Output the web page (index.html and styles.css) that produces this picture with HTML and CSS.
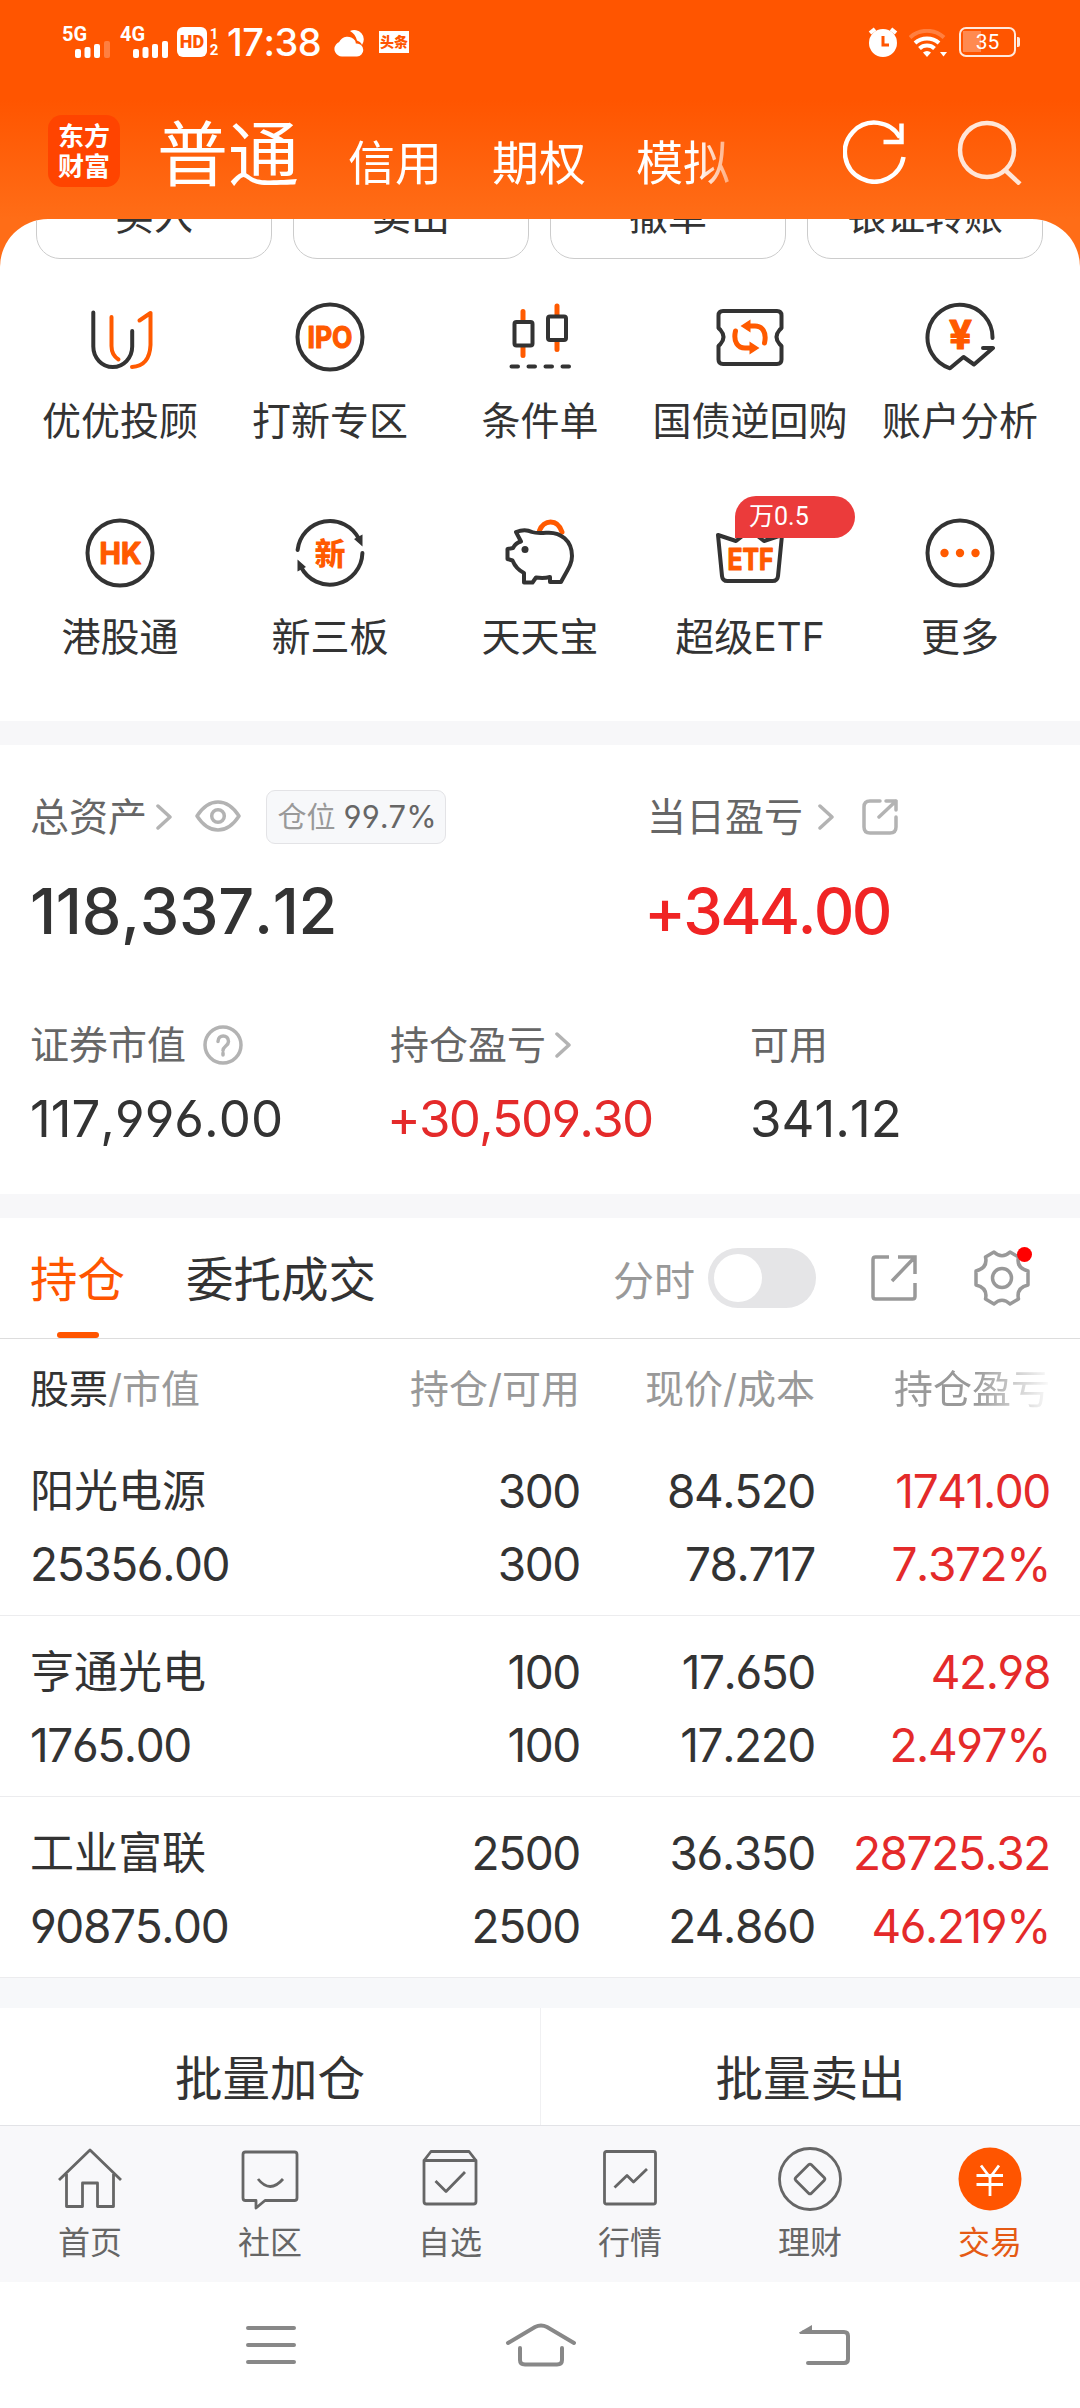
FILE: index.html
```html
<!DOCTYPE html>
<html lang="zh-CN">
  <head>
    <meta charset="UTF-8" />
    <meta name="viewport" content="width=device-width, initial-scale=1.0" />
    <title>东方财富 - 交易</title>
    <link rel="stylesheet" href="styles.css">
  </head>
  <body>
    <header class="top">
      <div class="status">
        <div class="sim">
          <span>5G</span>
          <svg width="36" height="17" viewBox="0 0 36 17" fill="#fff">
            <rect x="0" y="8" width="6" height="9" rx="2" />
            <rect x="9.5" y="6" width="6" height="11" rx="2" />
            <rect x="19" y="3" width="6" height="14" rx="2" />
            <rect x="29" y="0" width="6" height="17" rx="2" opacity="0.25" />
          </svg>
        </div>
        <div class="sim">
          <span>4G</span>
          <svg width="36" height="17" viewBox="0 0 36 17" fill="#fff">
            <rect x="0" y="8" width="6" height="9" rx="2" />
            <rect x="9.5" y="6" width="6" height="11" rx="2" />
            <rect x="19" y="3" width="6" height="14" rx="2" />
            <rect x="29" y="0" width="6" height="17" rx="2" />
          </svg>
        </div>
        <div class="hd">HD</div>
        <div class="hd-num"><span>1</span><span>2</span></div>
        <div class="clock">17:38</div>
        <svg class="cloud" width="31" height="29" viewBox="0 0 31 29" fill="#fff">
          <path d="M16 3a9.500 9.500 0 0 1 12 14c-1-2.500-3-3.800-5-4.500C22 8 19.500 5 16 3z" />
          <path d="M8 28.500a7.500 7.500 0 0 1-6-12c1-1.300 2-2 3-2.300A9.300 9.300 0 0 1 21 12.500c.6 1 .8 2 .8 3a6.600 6.600 0 0 1 7.500 6.500 6.500 6.500 0 0 1-6.300 6.500z" />
        </svg>
        <div class="toutiao">头条</div>
        <div class="status-right">
          <svg width="30" height="30" viewBox="0 0 30 30">
            <circle cx="15" cy="16" r="14" fill="#fff" />
            <path d="M2 6l5-4M28 6l-5-4" stroke="#fff" stroke-width="4" />
            <path d="M15 9v9h6" fill="none" stroke="#ff5500" stroke-width="3" />
          </svg>
          <svg class="wifi" width="38" height="29" viewBox="0 0 38 29" fill="none" stroke="#fff" stroke-width="4">
            <path d="M1 8.500a25 25 0 0 1 34 0" opacity="0.25" />
            <path d="M6 14a18 18 0 0 1 24 0" />
            <path d="M10.500 19.500a11 11 0 0 1 15 0" />
            <path d="M14 23.500a6 6 0 0 1 8 0l-4 4.500z" fill="#fff" stroke="none" />
            <path d="M31 23h7l-3.500 4.500z" fill="#fff" stroke="none" />
          </svg>
          <div class="battery"><span>35</span></div>
        </div>
      </div>
      <div class="title-bar">
        <div class="logo">东方<br>财富</div>
        <nav class="accounts">
          <span class="current">普通</span>
          <span>信用</span>
          <span>期权</span>
          <span>模拟</span>
        </nav>
        <svg class="refresh" width="64" height="64" viewBox="0 0 64 64" fill="none" stroke="#fff" stroke-width="4.500">
          <path d="M60.500 37A29.500 29.500 0 1 1 57 17.500" />
          <path d="M58.500 3.500v18.500h-18" />
        </svg>
        <svg width="66" height="66" viewBox="0 0 66 66" fill="none" stroke="#ffe6d8" stroke-width="4.500">
          <circle cx="31" cy="31" r="27" />
          <path d="M49 51l15 14" />
        </svg>
      </div>
    </header>

    <main class="panel">
      <div class="quick">
        <a>买入</a>
        <a>卖出</a>
        <a>撤单</a>
        <a>银证转账</a>
      </div>

      <div class="menu">
        <a class="item">
          <svg viewBox="0 0 72 72">
            <path d="M9.300 11.500v34a19.400 20.500 0 0 0 38.900 0v-15.500" />
            <path class="o" d="M27.500 16v29q0 9 7 13.500M55.500 19.500l11-7.500v32q-1 21-18.500 22" />
          </svg>
          <span>优优投顾</span>
        </a>
        <a class="item">
          <svg viewBox="0 0 72 72">
            <circle cx="36" cy="36" r="32.500" />
            <text x="13.500" y="47" textLength="45" lengthAdjust="spacingAndGlyphs">IPO</text>
          </svg>
          <span>打新专区</span>
        </a>
        <a class="item">
          <svg viewBox="0 0 72 72">
            <path class="o bold" d="M19 10.500v9M19 46v8.500M53 5v9M53 40v8.500" />
            <rect x="10.500" y="21" width="18" height="23.500" rx="2" />
            <rect x="44" y="15.500" width="18" height="23.500" rx="2" />
            <path d="M7.500 65.500h6.500M24.500 65.500h6.500M41.500 65.500h6.500M58.500 65.500h6.500" />
          </svg>
          <span>条件单</span>
        </a>
        <a class="item">
          <svg viewBox="0 0 72 72">
            <path d="M9 10h54q4.500 0 4.500 4.500V27l-2 2q-6 7 0 14l2 2v13.500q0 4.500-4.500 4.500H9q-4.500 0-4.500-4.500V45l2-2q6-7 0-14l-2-2V14.500Q4.500 10 9 10z" />
            <path class="o bold" d="M35 25h6c7 0 12 6 9.500 17M37 47h-6c-7 0-12-6-9.500-17" />
            <path class="fill" d="M26.500 25l10-6.500v13zM45.500 47l-10-6.500v13z" />
          </svg>
          <span>国债逆回购</span>
        </a>
        <a class="item">
          <svg viewBox="0 0 72 72">
            <path d="M68.500 37A32.500 32.500 0 1 0 26 67.300l13.500-11.300 10.500 7.500 19-16.500h-10" />
            <text x="25" y="47.500" textLength="23" lengthAdjust="spacingAndGlyphs" class="yen">¥</text>
          </svg>
          <span>账户分析</span>
        </a>
        <a class="item">
          <svg viewBox="0 0 72 72">
            <circle cx="36" cy="36" r="32.500" />
            <text x="15.500" y="47" textLength="42" lengthAdjust="spacingAndGlyphs">HK</text>
          </svg>
          <span>港股通</span>
        </a>
        <a class="item">
          <svg viewBox="0 0 72 72">
            <path d="M3.600 33A32.500 32.500 0 0 1 65 22M68.400 36A32.500 32.500 0 0 1 7 50" />
            <path class="dark" d="M68.500 29.500l-8.500-7.500 8.500-4.500zM3.500 42.500l8.500 7.500-8.500 4.500z" />
            <text x="36" y="47.500" class="cjk">新</text>
          </svg>
          <span>新三板</span>
        </a>
        <a class="item">
          <svg viewBox="0 0 72 72">
            <path class="o thick" d="M35.500 13.500c4-11 18-12.500 22.500 1.500" />
            <path d="M17 24.500l-5-9.500q9-3.500 16 0 4 1.500 14 .8C57 14.500 68 24 68 39c0 8-4 13-11 26H46v-5q-6 1.500-14 .5l-3.500 5H20V56Q12 52 8.500 43.500l-5-1.500V32l5.500-1q2.500-5 8-6.500z" />
            <circle class="dark" cx="21" cy="32.500" r="3.500" />
          </svg>
          <span>天天宝</span>
        </a>
        <a class="item">
          <svg viewBox="0 0 72 72">
            <path d="M4 18l18 6 14-11 14 11 18-6-4 41q-.5 5-5.500 5h-45q-5 0-5.500-5z" />
            <text x="13.500" y="52.500" textLength="46" lengthAdjust="spacingAndGlyphs">ETF</text>
          </svg>
          <em class="badge">万0.5</em>
          <span>超级ETF</span>
        </a>
        <a class="item">
          <svg viewBox="0 0 72 72">
            <circle cx="36" cy="36" r="32.500" />
            <g class="fill">
              <circle cx="20.500" cy="36" r="4.200" />
              <circle cx="36" cy="36" r="4.200" />
              <circle cx="51.500" cy="36" r="4.200" />
            </g>
          </svg>
          <span>更多</span>
        </a>
      </div>
    </main>

    <section class="assets">
      <div class="asset-main">
        <div>
          <div class="label">
            <span class="text">总资产</span>
            <svg class="arrow" viewBox="0 0 16 26"><path d="M2 2l12 11L2 24" /></svg>
            <svg class="eye" viewBox="0 0 46 32">
              <path d="M2 16Q11 2 23 2t21 14q-9 14-21 14T2 16z" />
              <circle cx="23" cy="16" r="6.300" />
            </svg>
            <span class="ratio">仓位 <b>99.7%</b></span>
          </div>
          <div class="big">118,337.12</div>
        </div>
        <div>
          <div class="label">
            <span class="text">当日盈亏</span>
            <svg class="arrow far" viewBox="0 0 16 26"><path d="M2 2l12 11L2 24" /></svg>
            <svg class="share" viewBox="0 0 36 36">
              <path d="M18 2H8Q2 2 2 8v20q0 6 6 6h20q6 0 6-6V18M24 2h10v9M34 2L17 18" />
            </svg>
          </div>
          <div class="big red">+344.00</div>
        </div>
      </div>
      <div class="asset-sub">
        <div>
          <div class="label">
            <span class="text">证券市值</span>
            <svg class="help" viewBox="0 0 40 40">
              <circle cx="20" cy="20" r="18" />
              <path d="M15 16.500c0-7.500 10.500-7.500 10.500 0 0 4.500-5.500 4.500-5.500 9M20 28v2" />
            </svg>
          </div>
          <div class="mid">117,996.00</div>
        </div>
        <div>
          <div class="label">
            <span class="text">持仓盈亏</span>
            <svg class="arrow near" viewBox="0 0 16 26"><path d="M2 2l12 11L2 24" /></svg>
          </div>
          <div class="mid red">+30,509.30</div>
        </div>
        <div>
          <div class="label"><span class="text">可用</span></div>
          <div class="mid">341.12</div>
        </div>
      </div>
    </section>

    <section class="holdings">
      <div class="tabs">
        <span class="tab active">持仓</span>
        <span class="tab">委托成交</span>
        <span class="minute">分时</span>
        <span class="switch"></span>
        <svg class="export" viewBox="0 0 46 46">
          <path d="M18 2H4.500Q2 2 2 4.500v37Q2 44 4.500 44h37q2.500 0 2.500-2.500V28M27 2h17v17M44 2L21 26" />
        </svg>
        <span class="setting">
          <svg viewBox="0 0 56 56">
            <path d="M20 2q8 7.500 16 0l8.500 5q-2.500 11 9.500 14v14q-12 3-9.500 14L36 54q-8-7.500-16 0l-8.500-5Q14 38 2 35V21Q14 18 11.500 7z" />
            <circle cx="28" cy="28" r="9.500" />
          </svg>
          <i class="dot"></i>
        </span>
      </div>

      <div class="row head">
        <span><b>股票</b>/市值</span>
        <span>持仓/可用</span>
        <span>现价/成本</span>
        <span class="fade">持仓盈亏</span>
      </div>
      <div class="row">
        <span class="name">阳光电源</span><span>300</span><span>84.520</span><span class="red">1741.00</span>
        <span>25356.00</span><span>300</span><span>78.717</span><span class="red">7.372%</span>
      </div>
      <div class="row">
        <span class="name">亨通光电</span><span>100</span><span>17.650</span><span class="red">42.98</span>
        <span>1765.00</span><span>100</span><span>17.220</span><span class="red">2.497%</span>
      </div>
      <div class="row">
        <span class="name">工业富联</span><span>2500</span><span>36.350</span><span class="red">28725.32</span>
        <span>90875.00</span><span>2500</span><span>24.860</span><span class="red">46.219%</span>
      </div>
      <div class="batch">
        <a>批量加仓</a>
        <a>批量卖出</a>
      </div>
    </section>

    <nav class="tabbar">
      <a>
        <svg viewBox="0 0 66 66">
          <path d="M2 34L33 4l31 30M9.500 28v32.500h16V37h15v23.500h16V28" />
        </svg>
        首页
      </a>
      <a>
        <svg viewBox="0 0 66 66">
          <path d="M8.500 6h49q2.500 0 2.500 2.500v43.500q0 2.500-2.500 2.500H28l-9 7.500v-7.500H8.500Q6 54.500 6 52V8.500Q6 6 8.500 6zM21 33q12 15 25 0" />
        </svg>
        社区
      </a>
      <a>
        <svg viewBox="0 0 66 66">
          <path d="M7 14.500h52v41q0 2.500-2.500 2.500h-47Q7 58 7 55.500zl7-9h38l7 9M18.500 35L29 45.500 48 26" />
        </svg>
        自选
      </a>
      <a>
        <svg viewBox="0 0 66 66">
          <path d="M9.500 5.500h47q2 0 2 2V56q0 2-2 2h-47q-2 0-2-2V7.500q0-2 2-2zM17.500 41.500l12.500-12 6.500 6.500L50 23" />
        </svg>
        行情
      </a>
      <a>
        <svg viewBox="0 0 66 66">
          <circle cx="33" cy="33" r="30.500" />
          <rect x="22" y="22" width="22" height="22" rx="2" transform="rotate(45 33 33)" />
        </svg>
        理财
      </a>
      <a class="on">
        <svg viewBox="0 0 66 66">
          <circle class="disc" cx="33" cy="33" r="31.500" />
          <path class="yuan" d="M24 19.500l9 12 9-12M33 31.500v18.500M19.500 29.500h26.500M19.500 38.500h26.500" />
        </svg>
        交易
      </a>
    </nav>

    <footer class="sysnav">
      <svg width="50" height="40" viewBox="0 0 50 40"><path d="M2 3h46M2 20h46M2 37h46" /></svg>
      <svg class="home" width="72" height="44" viewBox="0 0 72 44">
        <path d="M3 20L30 4q6-3 12 0l27 16M15 25v12q0 4.500 5 4.500h32q5 0 5-4.500V25" />
      </svg>
      <svg width="52" height="42" viewBox="0 0 52 42">
        <path d="M6 8h40q4 0 4 4v23q0 4-4 4H10" />
        <path class="tip" d="M1 8.500L14 1v9H2z" />
      </svg>
    </footer>
  </body>
</html>
```
FILE: styles.css
```css
* {
  box-sizing: border-box;
}
body {
  margin: 0;
  width: 1080px;
  background: #fff;
  color: #333;
  font-family: Inter, "Noto Sans CJK SC", sans-serif;
  font-size: 39px;
}
svg {
  display: block;
  flex: none;
}
.red {
  color: #e42a2a;
}

/* header */
.top {
  height: 268px;
  color: #fff;
  background: linear-gradient(#ff5500 100px, #ff6d17 219px);
}
.status {
  display: flex;
  align-items: center;
  height: 84px;
  padding: 0 61px 0 62px;
}
.sim {
  width: 58px;
  height: 32px;
}
.sim span {
  display: block;
  font: 700 20px/16px Roboto, sans-serif;
}
.sim svg {
  margin: -1px 0 0 13px;
}
.hd {
  width: 30px;
  height: 30px;
  margin-left: -1px;
  border-radius: 6px;
  background: #fff;
  color: #ff5500;
  font: 900 18px/30px Roboto, sans-serif;
  text-align: center;
}
.hd-num {
  width: 14px;
  font: 700 15px/16px Roboto, sans-serif;
  text-align: center;
}
.hd-num span {
  display: block;
}
.clock {
  width: 98px;
  margin: 0 0 0 6px;
  font-size: 38px;
  font-weight: 500;
  font-kerning: none;
  letter-spacing: -0.5px;
  line-height: 40px;
}
.cloud {
  margin-left: 9px;
}
.toutiao {
  width: 30px;
  height: 22px;
  margin-left: 14px;
  background: #fff;
  color: #ff5500;
  font: 900 14px/21px "Noto Sans CJK SC", sans-serif;
  text-align: center;
}
.status-right {
  display: flex;
  align-items: center;
  margin-left: auto;
}
.wifi {
  margin: 2px 12px 0 11px;
}
.battery {
  position: relative;
  width: 57px;
  height: 30px;
  margin-right: 3px;
  border: 2.5px solid #ffe9dd;
  border-radius: 7px;
  font: 21px/26px Roboto, sans-serif;
  text-align: center;
  background: linear-gradient(#ff8a50, #ff8a50) 2px 2px / 18px 21px no-repeat;
}
.battery::after {
  content: "";
  position: absolute;
  right: -6px;
  top: 8px;
  width: 3px;
  height: 10px;
  border-radius: 0 2px 2px 0;
  background: #ffe9dd;
}
.title-bar {
  display: flex;
  align-items: center;
  height: 135px;
  padding: 0 58px 0 48px;
}
.logo {
  width: 72px;
  height: 72px;
  margin-top: -1px;
  padding-top: 5px;
  border-radius: 14px;
  background: #ff4400;
  font: 700 26px/30px "Noto Sans CJK SC", sans-serif;
  text-align: center;
}
.accounts {
  display: flex;
  align-items: baseline;
  gap: 50px;
  width: 620px;
  margin: 14px 0 0 37px;
  font-size: 47px;
  line-height: 90px;
  -webkit-mask-image: linear-gradient(90deg, #000 540px, transparent 600px);
  mask-image: linear-gradient(90deg, #000 540px, transparent 600px);
}
.accounts .current {
  margin-right: -1px;
  font-size: 71px;
}
.refresh {
  margin: 0 49px 0 auto;
}

/* shortcuts */
.panel {
  height: 502px;
  margin-top: -49px;
  border-radius: 48px 48px 0 0;
  background: #fff;
  overflow: hidden;
}
.quick {
  display: grid;
  grid-template-columns: repeat(4, 236px);
  gap: 21px;
  margin: -45px 36px 0;
}
.quick a {
  height: 85px;
  border: 1px solid #ccc;
  border-radius: 24px;
  font-size: 39px;
  line-height: 81px;
  text-align: center;
}
.menu {
  display: grid;
  grid-template-columns: repeat(5, 210px);
  grid-auto-rows: 216px;
  padding: 42px 15px 0;
}
.item {
  position: relative;
  display: flex;
  flex-direction: column;
  align-items: center;
  white-space: nowrap;
}
.item svg {
  width: 72px;
  height: 72px;
  margin-bottom: 21px;
  fill: none;
  stroke: #333;
  stroke-width: 4;
  stroke-linecap: round;
  stroke-linejoin: round;
}
.item span {
  line-height: 54px;
}
.item .o {
  stroke: #ff5a00;
}
.item .bold,
.item .thick {
  stroke-width: 5;
}
.item .fill {
  fill: #ff5a00;
  stroke: none;
}
.item .dark {
  fill: #333;
  stroke: none;
}
.item text {
  font: 700 30px Inter, sans-serif;
  fill: #ff5a00;
  stroke: #ff5a00;
  stroke-width: 1.2;
}
.item .yen {
  font-size: 39px;
}
.item .cjk {
  font: 900 31px "Noto Sans CJK SC", sans-serif;
  text-anchor: middle;
  stroke: none;
}
.badge {
  position: absolute;
  left: 90px;
  top: -21px;
  width: 120px;
  height: 42px;
  padding-left: 14px;
  border-radius: 21px 21px 21px 0;
  background: #eb3b3b;
  color: #fff;
  font: 25px/42px Roboto, "Noto Sans CJK SC", sans-serif;
}

/* assets */
.assets {
  height: 497px;
  border: solid #f7f7f9;
  border-width: 24px 0;
  padding: 45px 30px 0;
}
.asset-main {
  display: grid;
  grid-template-columns: 617px 1fr;
}
.asset-sub {
  display: grid;
  grid-template-columns: 360px 360px 1fr;
  margin-top: 75px;
}
.label {
  display: flex;
  align-items: center;
  height: 54px;
  color: #666;
}
.label .text {
  margin-top: -6px;
}
.label svg {
  fill: none;
  stroke: #b3b3b3;
  stroke-width: 3.5;
  stroke-linecap: round;
  stroke-linejoin: round;
}
.arrow {
  width: 16px;
  height: 26px;
  margin-left: 9px;
}
.arrow.far {
  margin-left: 15px;
}
.eye {
  width: 46px;
  height: 32px;
  margin: -2px 25px 0 23px;
}
.share {
  width: 36px;
  height: 36px;
  margin-left: 28px;
}
.help {
  width: 40px;
  height: 40px;
  margin-left: 17px;
}
.ratio {
  width: 180px;
  height: 54px;
  padding-left: 2px;
  border: 1px solid #e3e3e6;
  border-radius: 9px;
  background: #f7f8fa;
  color: #999;
  font-size: 29px;
  line-height: 52px;
  text-align: center;
  white-space: nowrap;
}
.ratio b {
  color: #666;
  font-size: 31px;
  font-weight: 400;
}
.ratio b,
.big,
.mid,
.row {
  font-kerning: none;
  font-feature-settings: "cv03", "cv04";
}
.big {
  height: 64px;
  margin-top: 35px;
  font-size: 63px;
  font-weight: 550;
  line-height: 64px;
  letter-spacing: -0.3px;
}
.big.red {
  margin-left: -3px;
  color: #f02424;
  letter-spacing: -2.7px;
}
.mid {
  height: 60px;
  margin-top: 17px;
  font-size: 51px;
  line-height: 60px;
}
.mid.red {
  margin-left: -3px;
  letter-spacing: -1.8px;
}

/* holdings */
.tabs {
  display: flex;
  align-items: center;
  height: 121px;
  padding-left: 30px;
  border-bottom: 1px solid #ddd;
}
.tab {
  position: relative;
  margin-right: 61px;
  font-size: 47.5px;
  line-height: 120px;
  padding-top: 3px;
}
.tab.active {
  color: #ff5500;
}
.tab.active::after {
  content: "";
  position: absolute;
  left: 27px;
  bottom: 2px;
  width: 42px;
  height: 6px;
  border-radius: 3px;
  background: #ff5500;
}
.minute {
  margin-left: auto;
  color: #999;
  font-size: 41px;
}
.switch {
  width: 108px;
  height: 60px;
  margin-left: 13px;
  padding: 6px;
  border-radius: 30px;
  background: #e5e5e7;
}
.switch::before {
  content: "";
  display: block;
  width: 48px;
  height: 48px;
  border-radius: 50%;
  background: #fff;
}
.export,
.setting svg {
  fill: none;
  stroke: #999;
  stroke-width: 3.5;
}
.export {
  width: 46px;
  height: 46px;
  margin-left: 55px;
}
.setting {
  position: relative;
  margin: 0 50px 0 57px;
}
.setting svg {
  width: 56px;
  height: 56px;
  stroke-linejoin: round;
}
.dot {
  position: absolute;
  right: -2px;
  top: -3px;
  width: 15px;
  height: 15px;
  border-radius: 50%;
  background: #f00;
}
.row {
  display: grid;
  grid-template-columns: 350px 200px 235px 235px;
  grid-auto-rows: 73px;
  height: 181px;
  padding: 20px 30px 0;
  border-bottom: 1px solid #ececee;
  font-size: 46px;
  line-height: 73px;
  letter-spacing: -1.4px;
  text-align: right;
  white-space: nowrap;
}
.row span:nth-child(4n + 1) {
  text-align: left;
}
.row .name {
  font-size: 44px;
  letter-spacing: 0;
}
.row.head {
  height: 96px;
  padding-top: 13px;
  border: 0;
  color: #999;
  font-size: 39px;
  letter-spacing: 0;
}
.head b {
  color: #333;
  font-weight: 400;
}
.head .fade {
  -webkit-mask-image: linear-gradient(90deg, #000 160px, transparent 238px);
  mask-image: linear-gradient(90deg, #000 160px, transparent 238px);
}
.batch {
  display: grid;
  grid-template-columns: 1fr 1fr;
  height: 147px;
  overflow: hidden;
  border-top: 30px solid #f7f8fa;
  font-size: 47.5px;
  line-height: 142px;
  text-align: center;
}
.batch a + a {
  border-left: 1px solid #f0f0f2;
}

/* bottom bars */
.tabbar {
  display: grid;
  grid-template-columns: repeat(6, 180px);
  height: 157px;
  padding-top: 20px;
  border-top: 1px solid #e2e3e7;
  background: #f8f8fa;
  color: #666;
  font-size: 32px;
  line-height: 46px;
}
.tabbar a {
  display: flex;
  flex-direction: column;
  align-items: center;
  gap: 8px;
}
.tabbar svg {
  width: 66px;
  height: 66px;
  fill: none;
  stroke: #666;
  stroke-width: 2.8;
  stroke-linejoin: round;
}
.tabbar .on {
  color: #e55a14;
}
.tabbar .disc {
  fill: #ff5500;
  stroke: none;
}
.tabbar .yuan {
  stroke: #fff;
}
.sysnav {
  display: flex;
  align-items: center;
  height: 126px;
  padding: 0 230px 0 246px;
}
.sysnav svg {
  fill: none;
  stroke: #888;
  stroke-width: 4;
  stroke-linecap: round;
}
.sysnav .home {
  margin: 0 auto 0 209px;
}
.sysnav .tip {
  fill: #888;
  stroke: none;
}
```
